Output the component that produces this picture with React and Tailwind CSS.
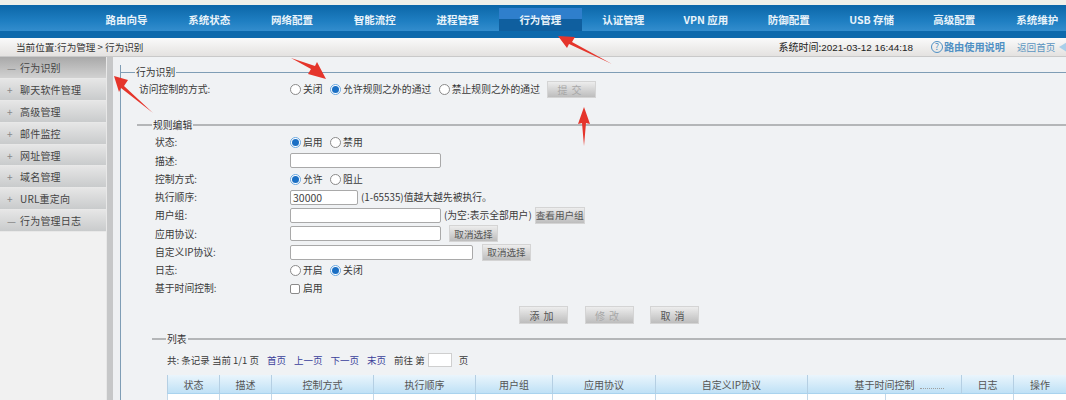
const cjk = { fontFamily: '"Noto Sans CJK SC", "Liberation Sans", sans-serif' };

function Radio({ on, label }) {
  return (
    <span className="inline-flex items-center gap-[2px]">
      <span className={`inline-flex h-[11px] w-[11px] items-center justify-center rounded-full border ${on ? 'border-[#6aa8e0] bg-white' : 'border-[#8a8a8a] bg-white'}`}>
        {on && <span className="block h-[7px] w-[7px] rounded-full bg-[#1a6fc4]" />}
      </span>
      <span>{label}</span>
    </span>
  );
}

function Field({ w, value }) {
  return (
    <span className={`box-border flex h-[15px] shrink-0 items-center rounded-[2px] border border-[#a9a9a9] bg-white pl-[2px] text-[10.5px] text-[#444] ${w}`}>{value}</span>
  );
}

function Btn({ w, children, dim, h = 'h-[17px]', spaced }) {
  return (
    <span className={`inline-flex ${w} ${h} items-center justify-center whitespace-nowrap border border-[#d4d4d4] bg-gradient-to-b from-[#ededed] to-[#bdbdbd] ${spaced ? 'text-[10px] tracking-[4px]' : 'text-[9.6px]'} ${dim ? 'text-[#a8a8a8]' : 'text-[#555]'}`}>{children}</span>
  );
}

function Row({ label, children }) {
  return (
    <div className="flex h-[18.25px] items-center">
      <span className="w-[135px] shrink-0">{label}</span>
      {children}
    </div>
  );
}

function SectionTitle({ lead, text, mt, thick }) {
  return (
    <div className={`flex items-center ${mt ?? ''}`}>
      <span className={`${lead} ${thick ? 'h-[2px] bg-[#b4b6b8]' : 'h-px bg-[#7f9db5]'}`} />
      <span className="px-[1px] leading-[14px] text-[#333]">{text}</span>
      <span className={`flex-1 ${thick ? 'h-[2px] bg-[#b4b6b8]' : 'h-px bg-[#7f9db5]'}`} />
    </div>
  );
}

const NAV = ['路由向导', '系统状态', '网络配置', '智能流控', '进程管理', '行为管理', '认证管理', 'VPN 应用', '防御配置', 'USB 存储', '高级配置', '系统维护'];
const SIDE = [
  ['—', '行为识别', true],
  ['+', '聊天软件管理'],
  ['+', '高级管理'],
  ['+', '邮件监控'],
  ['+', '网址管理'],
  ['+', '域名管理'],
  ['+', 'URL重定向'],
  ['—', '行为管理日志'],
];
const COLS = [
  ['状态', 'w-[52px]'],
  ['描述', 'w-[52px]'],
  ['控制方式', 'w-[102px]'],
  ['执行顺序', 'w-[102px]'],
  ['用户组', 'w-[77px]'],
  ['应用协议', 'w-[103px]'],
  ['自定义IP协议', 'w-[152px]'],
  ['基于时间控制', 'w-[154px]'],
  ['日志', 'w-[52px]'],
  ['操作', 'w-[53px]'],
];
const BODY = ['w-[52px]', 'w-[52px]', 'w-[102px]', 'w-[102px]', 'w-[77px]', 'w-[103px]', 'w-[152px]', 'w-[78px]', 'w-[128px]', 'w-[53px]'];

function Arrow({ points }) {
  return (
    <svg className="pointer-events-none absolute left-0 top-0" width="1066" height="400" viewBox="0 0 1066 400">
      <polygon points={points} fill="#e5352b" />
    </svg>
  );
}

export default function App() {
  return (
    <div style={cjk} className="relative flex h-[400px] w-[1066px] flex-col overflow-hidden bg-[#f0f2f4] text-[9.8px] text-[#3a3a3a]">
      <div className="h-[5px] shrink-0 bg-[#eef0ea]" />
      <div className="h-[33px] shrink-0 bg-gradient-to-b from-[#0a66a8] via-[#1f7fc2] to-[#3f97d6]">
        <div className="flex h-[26px] pl-[85px] pt-[3px]">
          {NAV.map((n, i) => (
            <span
              key={n}
              className={`flex h-[23px] w-[82.8px] shrink-0 items-center justify-center text-[10.5px] font-bold text-[#e9f3fa] ${i === 5 ? 'bg-gradient-to-b from-[#2f7fcc] from-50% to-[#0f5f9f] to-50%' : ''}`}
            >
              {n}
            </span>
          ))}
        </div>
        <div className="h-[7px] bg-[#0d69ac]" />
      </div>
      <div className="flex h-[19px] shrink-0 items-center overflow-hidden border-b border-[#c9c9c9] bg-gradient-to-b from-[#fafafa] to-[#e4e2e0] pl-[16px]">
        <span className="text-[9.6px] text-[#333]">当前位置:行为管理 &gt; 行为识别</span>
        <span className="ml-auto whitespace-nowrap text-[10px] text-[#222]">系统时间:<span style={{ fontFamily: '"Liberation Sans", sans-serif' }} className="text-[9.9px]">2021-03-12 16:44:18</span></span>
        <span className="ml-[18px] flex items-center whitespace-nowrap text-[10.2px] font-bold text-[#4f90c4]">
          <span className="mr-[1px] inline-flex h-[12px] w-[12px] items-center justify-center rounded-full border border-[#4f90c4] text-[9px] font-normal">?</span>
          路由使用说明
        </span>
        <span className="ml-[12px] flex w-[49px] shrink-0 items-center whitespace-nowrap text-[9.6px] text-[#5a94c0]">
          返回首页
          <svg className="ml-[4px] shrink-0" width="8" height="10" viewBox="0 0 8 10"><polygon points="0,5 8,0 8,10" fill="#a9cfe9" /></svg>
        </span>
      </div>

      <div className="flex min-h-0 flex-1">
        <aside className="w-[106px] shrink-0 bg-[#f1f1f1]">
          {SIDE.map(([m, t, active]) => (
            <div
              key={t}
              className={`flex h-[21.9px] items-center border-b border-[#e8e8e8] pl-[7px] text-[10px] ${active ? 'bg-gradient-to-b from-[#a9a9a9] to-[#d2d2d2]' : 'bg-gradient-to-b from-[#e6e6e6] to-[#c9cbcc]'}`}
            >
              <span className="w-[13px] text-[#888]">{m}</span>
              <span className="tracking-[0.2px] text-[#444]">{t}</span>
            </div>
          ))}
        </aside>
        <div className="flex w-[14px] shrink-0">
          <span className="w-[1px] bg-[#e8e8e8]" />
          <span className="w-[6px] bg-[#c6c7c8]" />
          <span className="flex-1 bg-[#eef0f2]" />
        </div>

        <main className="min-w-0 flex-1 pt-[8px]">
          <div className="h-full border-l border-[#7f9db5]">
            <SectionTitle lead="w-[14px]" text="行为识别" />
            <div className="flex h-[18px] items-center pl-[18px] pt-[3px]">
              <span className="w-[151px] shrink-0">访问控制的方式:</span>
              <span className="flex items-center gap-[7.5px]">
                <Radio label="关闭" />
                <Radio on label="允许规则之外的通过" />
                <Radio label="禁止规则之外的通过" />
              </span>
              <span className="ml-[7px]"><Btn w="w-[49px]" dim spaced>提交</Btn></span>
            </div>

            <div className="pl-[16px] pt-[21px]">
              <SectionTitle thick lead="w-[15px]" text="规则编辑" />
              <div className="pl-[18px] pt-[1.5px]">
                <Row label="状态:"><span className="flex gap-[7.5px]"><Radio on label="启用" /><Radio label="禁用" /></span></Row>
                <Row label="描述:"><Field w="w-[151px]" /></Row>
                <Row label="控制方式:"><span className="flex gap-[7.5px]"><Radio on label="允许" /><Radio label="阻止" /></span></Row>
                <Row label="执行顺序:"><Field w="w-[68px]" value="30000" /><span className="ml-[3px] whitespace-nowrap">(1-65535)值越大越先被执行。</span></Row>
                <Row label="用户组:">
                  <Field w="w-[151px]" />
                  <span className="ml-[3px] whitespace-nowrap">(为空:表示全部用户)</span>
                  <span className="ml-[3px]"><Btn w="w-[50px]">查看用户组</Btn></span>
                </Row>
                <Row label="应用协议:">
                  <Field w="w-[151px]" />
                  <span className="ml-[8px]"><Btn w="w-[49px]">取消选择</Btn></span>
                </Row>
                <Row label="自定义IP协议:">
                  <Field w="w-[183px]" />
                  <span className="ml-[9px]"><Btn w="w-[49px]">取消选择</Btn></span>
                </Row>
                <Row label="日志:"><span className="flex gap-[7.5px]"><Radio label="开启" /><Radio on label="关闭" /></span></Row>
                <Row label="基于时间控制:">
                  <span className="inline-flex items-center gap-[3px]"><span className="h-[10px] w-[10px] rounded-[2px] border border-[#8a8a8a] bg-white" />启用</span>
                </Row>
              </div>
              <div className="flex gap-[16.5px] pl-[382px] pt-[8.5px]">
                <Btn w="w-[49px]" h="h-[18px]" spaced>添加</Btn>
                <Btn w="w-[49px]" h="h-[18px]" dim spaced>修改</Btn>
                <Btn w="w-[49px]" h="h-[18px]" spaced>取消</Btn>
              </div>
              <div className="pl-[15px] pt-[8px]">
                <SectionTitle thick lead="w-[14px]" text="列表" />
                <div className="mt-[6px] flex h-[16px] items-center gap-[8px] pl-[15px] text-[9.5px]">
                  <span>共: 条记录 当前 1/1 页</span>
                  <span className="text-[#3a3f9a]">首页</span>
                  <span className="text-[#3a3f9a]">上一页</span>
                  <span className="text-[#3a3f9a]">下一页</span>
                  <span className="text-[#3a3f9a]">末页</span>
                  <span className="flex items-center gap-[2px]">前往 第<span className="mx-[1px] h-[14px] w-[24px] border border-[#cfcfcf] bg-white" /></span>
                  <span className="-ml-[2px]">页</span>
                </div>
                <div className="ml-[15px] mt-[7px] w-[920px]">
                  <div className="flex">
                    {COLS.map(([c, w]) => (
                      <div key={c} className={`relative flex h-[19px] ${w} shrink-0 items-center justify-center border-b border-l border-b-[#a9d3ee] border-l-[#b5cfe3] bg-gradient-to-b from-[#eaf5fc] to-[#bfe1f6] text-[10px] text-[#555]`}>
                        {c}
                        {c === '基于时间控制' && <span className="absolute left-[112px] top-[13px] w-[24px] border-t border-dotted border-[#a0a0a0]" />}
                      </div>
                    ))}
                  </div>
                  <div className="flex">
                    {BODY.map((w, i) => (
                      <div key={i} className={`h-[10px] ${w} shrink-0 border-l border-[#c4d8e8] bg-white`} />
                    ))}
                  </div>
                </div>
              </div>
            </div>
          </div>
        </main>
      </div>

      <Arrow points="558,36 575,37 572,42 612,64 569,44 567,48" />
      <Arrow points="114,76 128,80 124,86 153,113 121,88 119,92" />
      <Arrow points="326,79 308,74 311,69 291,58 315,66 317,62" />
      <Arrow points="584,107 590,124 586,123 584,146 582,123 578,124" />
    </div>
  );
}
